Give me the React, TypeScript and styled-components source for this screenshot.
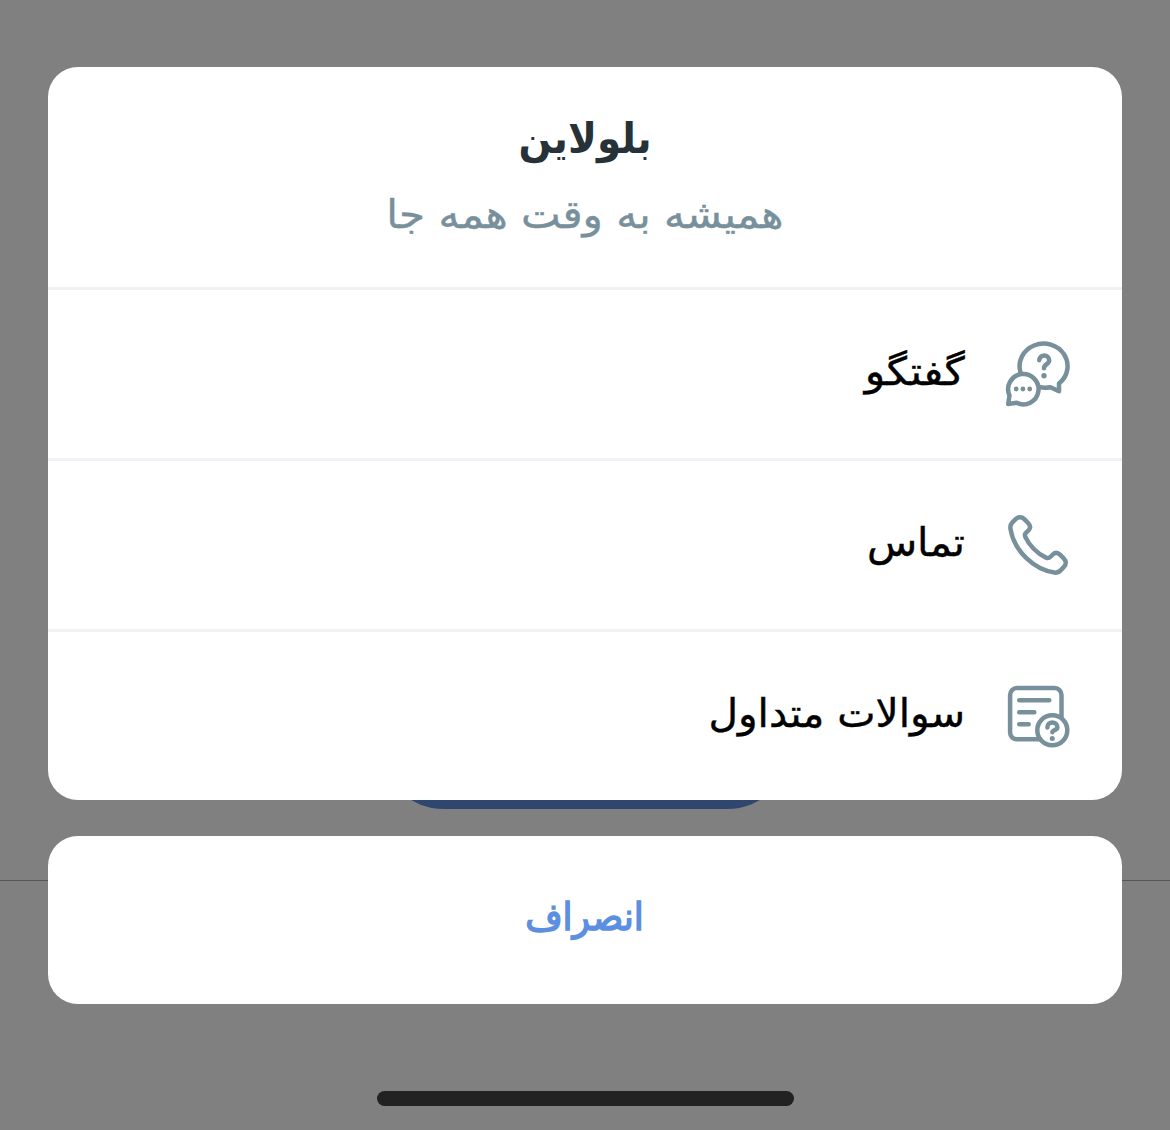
import React from "react";
import styled, { createGlobalStyle } from "styled-components";

const GlobalStyle = createGlobalStyle`
  *, *::before, *::after { box-sizing: border-box; }
  body {
    margin: 0;
    background: #808080;
    font-family: "DejaVu Sans", sans-serif;
  }
`;

const Screen = styled.div`
  position: relative;
  width: 1170px;
  height: 1130px;
  overflow: hidden;
  background: #808080;
`;

const DimmedButton = styled.div`
  position: absolute;
  left: 380px;
  top: 681px;
  width: 411px;
  height: 128px;
  border-radius: 64px;
  background: #2f476f;
`;

const DimmedRule = styled.div`
  position: absolute;
  left: 0;
  right: 0;
  top: 880px;
  height: 1px;
  background: #575757;
`;

const SheetArea = styled.div`
  position: relative;
  height: 100%;
  padding: 67px 48px 24px;
  display: flex;
  flex-direction: column;
  align-items: center;
`;

const Card = styled.section`
  width: 100%;
  border-radius: 30px;
  background: #fff;
  overflow: hidden;
`;

const Header = styled.header`
  height: 220px;
  padding-top: 42px;
  display: flex;
  flex-direction: column;
  align-items: center;
`;

const Label = styled.span<{
  $size: number;
  $color: string;
  $bold?: boolean;
  $stroke?: number;
  $stretch?: number;
  $origin?: string;
}>`
  display: block;
  white-space: nowrap;
  line-height: 60px;
  font-size: ${(p) => p.$size}px;
  font-weight: ${(p) => (p.$bold ? 700 : 400)};
  color: ${(p) => p.$color};
  -webkit-text-stroke: ${(p) => p.$stroke ?? 0.4}px ${(p) => p.$color};
  transform: scaleX(${(p) => p.$stretch ?? 1});
  transform-origin: ${(p) => p.$origin ?? "center"};
`;

const Subtitle = styled.div`
  margin-top: 16px;
`;

const Row = styled.button<{ $line: string }>`
  width: 100%;
  height: 171px;
  padding: 0 48px 0 0;
  border: 0;
  border-top: 3px solid ${(p) => p.$line};
  background: none;
  font: inherit;
  display: flex;
  align-items: center;
  gap: 37px;
`;

const RowText = styled.div`
  padding-bottom: 5px;
`;

const Icon = styled.svg`
  flex: none;
  width: 72px;
  height: 72px;
  fill: none;
  stroke: #78909c;
  stroke-width: 4.5;
  stroke-linecap: round;
  stroke-linejoin: round;
`;

const CancelCard = styled.button`
  width: 100%;
  height: 168px;
  margin-top: 36px;
  padding: 0 2px 6px 0;
  border: 0;
  border-radius: 30px;
  background: #fff;
  font: inherit;
  display: flex;
  align-items: center;
  justify-content: center;
`;

const HomeIndicator = styled.div`
  width: 417px;
  height: 15px;
  margin-top: auto;
  border-radius: 8px;
  background: #222;
`;

const ChatIcon = () => (
  <Icon viewBox="0 0 72 72">
    <path d="M18.4 34A24 22.5 0 1 1 57 45.4V53.2L48.5 49.2Q43 50.2 38 49.3" />
    <path d="M7.5 57.5A15.2 15.2 0 1 1 14.6 64.8L6.2 66Z" />
    <path d="M37.2 22.2C37.6 16 46.9 16 47.2 22.4C47.3 26.4 42 26 42 30.2" />
    <g fill="#78909c" stroke="none">
      <circle cx="42" cy="37.7" r="2.7" />
      <circle cx="14.2" cy="51" r="2.4" />
      <circle cx="20.9" cy="51" r="2.4" />
      <circle cx="27.7" cy="51" r="2.4" />
    </g>
  </Icon>
);

const PhoneIcon = () => (
  <Icon viewBox="0 0 72 72">
    <path d="M13.4 10.3C16 7.7 19.8 7.7 22.3 10.1L26.1 14C28.6 16.6 28.6 19.2 26.5 21.4L23.9 23.8C22.7 25 22.6 26.2 23.3 27.8C27 36 35 44.5 44 48.6C45.7 49.4 47 49.2 48.2 48L50.8 45.5C53 43.4 55.6 43.4 58 45.7L61.7 49.3C64.4 52 64.4 55.2 62 57.8L58.9 61.1C57.2 62.9 55 63.8 52.5 63.6C32 60.6 12 42 8.5 20C8.1 17.5 8.6 15.1 10.4 13.3Z" />
  </Icon>
);

const FaqIcon = () => (
  <Icon viewBox="0 0 72 72">
    <rect x="8.1" y="8.1" width="51.4" height="51.2" rx="6.8" />
    <path d="M17.2 20.2H47.3M17.2 32.2H32.3M17.2 44.2H26.7" />
    <circle cx="50.3" cy="50.2" r="15" fill="#fff" />
    <path d="M45.4 47.4C45.2 40.8 55.4 40.8 55.4 47.2C55.4 50.6 50.6 49.6 50.4 52.2" />
    <circle cx="50.3" cy="58.4" r="2.5" fill="#78909c" stroke="none" />
  </Icon>
);

const items = [
  { text: "گفتگو", icon: <ChatIcon />, line: "#f2f2f2", stretch: 1.09 },
  { text: "تماس", icon: <PhoneIcon />, line: "#f1f2f6", stretch: 1.055 },
  { text: "سوالات متداول", icon: <FaqIcon />, line: "#f2f2f2", stretch: 1.043 },
];

export default function App() {
  return (
    <>
      <GlobalStyle />
      <Screen dir="rtl">
        <DimmedButton />
        <DimmedRule />
        <SheetArea>
          <Card>
            <Header>
              <Label $size={42} $color="#263238" $bold $stroke={0} $stretch={0.925}>بلولاین</Label>
              <Subtitle>
                <Label $size={39} $color="#78909c" $stretch={1.08}>همیشه به وقت همه جا</Label>
              </Subtitle>
            </Header>
            {items.map((item) => (
              <Row key={item.text} $line={item.line}>
                {item.icon}
                <RowText>
                  <Label $size={39} $color="#000" $stretch={item.stretch} $origin="right center">{item.text}</Label>
                </RowText>
              </Row>
            ))}
          </Card>
          <CancelCard>
            <Label $size={38} $color="#5d8fe0" $stroke={1.5} $stretch={0.95}>انصراف</Label>
          </CancelCard>
          <HomeIndicator />
        </SheetArea>
      </Screen>
    </>
  );
}
